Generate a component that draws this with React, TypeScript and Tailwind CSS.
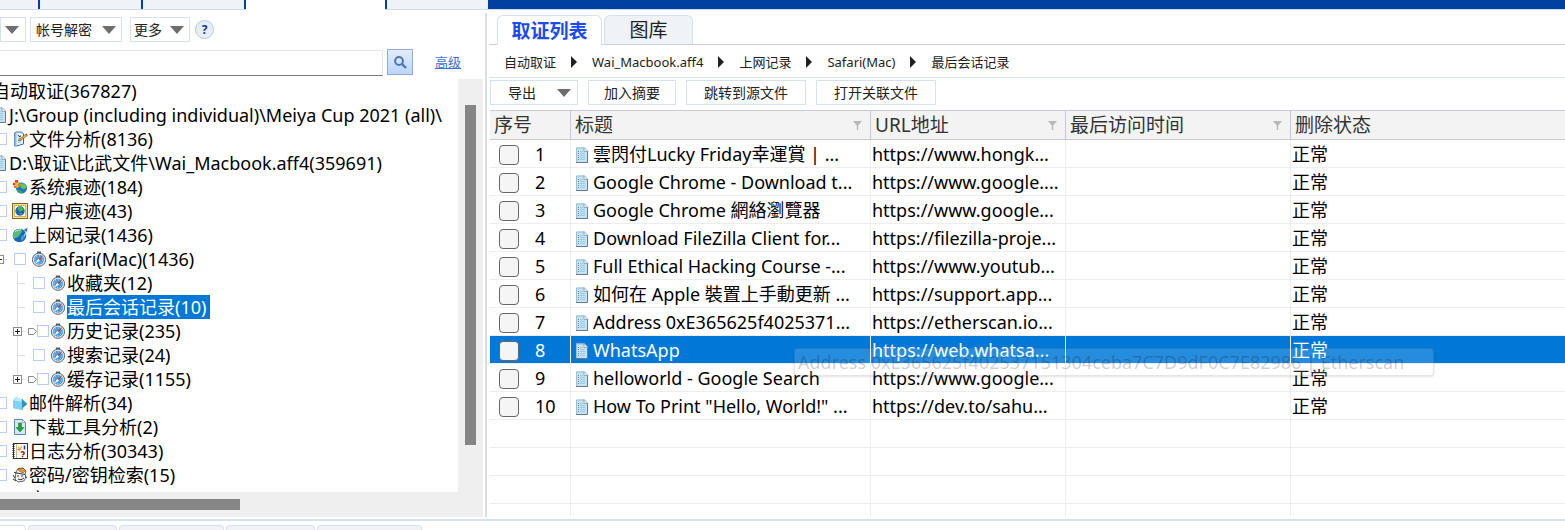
import React from 'react';

type IconName = 'doc' | 'edit' | 'system' | 'user' | 'globe' | 'compass' | 'mail' | 'download' | 'log' | 'key' | 'blank';

function Icon({ name }: { name: IconName }) {
  return (
    <svg width="16" height="16" viewBox="0 0 16 16" className="block shrink-0" aria-hidden="true">
      {name === 'doc' && (
        <g>
          <path d="M2 .5h8.500L14 4v11.500H2z" fill="#c5e2f3" />
          <path d="M2.500 15V1H10" fill="none" stroke="#9dbdd2" />
          <path d="M13.500 4v11.500H2" fill="none" stroke="#66788a" />
          <path d="M10 .5v4h4z" fill="#eef8fd" stroke="#7b93a5" strokeWidth=".7" />
          <path d="M6 4.500h3M6 6.500h5M6 8.500h5M6 10.500h5M6 12.500h5" stroke="#9ccbe6" />
          <path d="M4 4h1v1H4zM4 10h1v1H4z" fill="#3aa35a" />
          <path d="M4 6h1v1H4zM4 12h1v1H4z" fill="#4a87c0" />
          <path d="M4 8h1v1H4z" fill="#e07a5a" />
        </g>
      )}
      {name === 'edit' && (
        <g>
          <path d="M2.500 2l2-1h5l2 2v10l-7 2h-2z" fill="#e4f1fc" stroke="#2f6ea5" />
          <path d="M2.500 2v13l2-.5V1.500z" fill="#8dbde6" />
          <path d="M6 7h3M6 9h4M6 11h3" stroke="#8dbde6" />
          <path d="M7 8.500L14 3l1.500 1.500-6.500 4.500-2.500.8z" fill="#f4b93f" stroke="#6b4c1a" strokeWidth=".6" />
          <path d="M13.300 3.500l1.200-1 1 1.500-1 .8z" fill="#a9562c" />
          <path d="M6 4l1 1.500L9 5" fill="none" stroke="#333" />
        </g>
      )}
      {name === 'system' && (
        <g>
          <circle cx="9.500" cy="9" r="5.500" fill="#1f6fd0" />
          <path d="M8 5c3-2 6 1 7 3-2 1-2 3-4 2s-3-2-3-5z" fill="#5cc94a" />
          <path d="M5 11c2-1 5 0 6 3-3 1-5-1-6-3z" fill="#38a84f" />
          <path d="M1 5l3-3 3 2 1 3-3 2-3-1z" fill="#f2b632" />
          <path d="M3 1h3v2.500H3zM1 4h2v2H1z" fill="#e33b2e" />
          <path d="M2 7h2.500v2H2zM6 5h2v2H6z" fill="#e9762c" />
          <path d="M6 2.500l2 1-1 1.500z" fill="#7ed957" />
        </g>
      )}
      {name === 'user' && (
        <g>
          <rect x=".5" y=".5" width="15" height="15" fill="#f1e29a" stroke="#7d6a25" />
          <rect x="2.500" y="2.500" width="11" height="11" fill="#fffbe0" stroke="#d3b655" />
          <circle cx="8" cy="8" r="4.700" fill="#1b62c4" />
          <path d="M6 4c3-1 6 1 5.500 3C10 9 9 7 8 9 7 7 5 7 6 4zM7 10l3 0-1 2.500z" fill="#45b84c" />
        </g>
      )}
      {name === 'globe' && (
        <g>
          <circle cx="7.500" cy="8.500" r="6.800" fill="#1a64b8" />
          <path d="M3 4c3-3 7-2 7 0S8 7 7 9s-3 1-5 3C0 9 1 6 3 4z" fill="#55b97c" />
          <path d="M9 10c1-2 3-2 4-1 0 2-2 4-4 5z" fill="#3f9fd8" />
          <path d="M3 5c2-2 4-2 6-2" fill="none" stroke="#c8f0d4" />
          <path d="M12 9q2-2 2.500-6" fill="none" stroke="#9fd4f7" strokeWidth="1.200" />
          <path d="M11.500 3L15.500.5 15 5z" fill="#2c7ed6" />
        </g>
      )}
      {name === 'compass' && (
        <g>
          <path d="M6 .5h4v2H6z" fill="#555" />
          <circle cx="8" cy="8.700" r="6.600" fill="#e3e6e9" stroke="#5c6269" />
          <circle cx="8" cy="8.700" r="5" fill="#4a9de0" />
          <circle cx="8" cy="8.700" r="3.900" fill="none" stroke="#cbe8ff" strokeDasharray="1 2" />
          <path d="M12 4L9 9.500 7.200 8z" fill="#d9442f" />
          <path d="M4 13l3.200-5L9 9.500z" fill="#fff" />
        </g>
      )}
      {name === 'mail' && (
        <g>
          <path d="M1 5l3-3 4 2h3v11L1 13z" fill="#5cc0e8" />
          <path d="M1 6l9 1v8L1 13z" fill="#7fd3f0" />
          <path d="M10 4l5.500 5L10 13.500z" fill="#2b93c4" />
          <path d="M1 5.500L4 2l6 2.500L9.500 7z" fill="#b9ebfa" />
        </g>
      )}
      {name === 'download' && (
        <g>
          <path d="M2.500.5h8l3 3v12h-11z" fill="#d4e7fb" stroke="#5b84b7" />
          <path d="M10.500.5v3h3z" fill="#fff" stroke="#5b84b7" strokeWidth=".6" />
          <path d="M6.500 4h3v4.500H12l-4 4.500-4-4.500h2.500z" fill="#1da532" stroke="#0c7f20" strokeWidth=".5" />
        </g>
      )}
      {name === 'log' && (
        <g>
          <rect x="1.500" y=".5" width="14" height="15" fill="#fffdf0" stroke="#333" />
          <path d="M1.500 1v14.500" stroke="#222" strokeDasharray="1 1" strokeWidth="2" />
          <path d="M4.500 1v14" stroke="#c9bd8e" />
          <path d="M6 4l2 2M10 3L8 6M8 6v2" stroke="#eab21d" strokeWidth="1.300" />
          <path d="M12.500 2.500v4" stroke="#2236d4" strokeWidth="1.500" />
          <path d="M9 9.500q1.500-1.500 2.800-.3T10.500 12M10.500 13v1.200" fill="none" stroke="#a51616" strokeWidth="1.500" />
          <path d="M5.500 6.500h2" stroke="#d85a8b" strokeWidth="1.300" />
        </g>
      )}
      {name === 'key' && (
        <g>
          <path d="M4 5l2-3.500 5-.5 3 3-1 3 1 3-2 4-6 1-3-3z" fill="#f4f4f2" stroke="#444" strokeWidth=".8" />
          <path d="M6 2l5-.8 2.500 2.500L11 6 7 4z" fill="#f0952c" stroke="#5b3713" strokeWidth=".5" />
          <path d="M2 5.500l11 2M5 9h2M9 9h2M6 12l3 .8 3-1.800M1 8l2 3M15 10.500l-2-.5M1 12l3 2" stroke="#333" fill="none" />
        </g>
      )}
    </svg>
  );
}

interface Node {
  level: number;
  label: string;
  icon?: IconName;
  expandable?: boolean;
  selected?: boolean;
}

const nodes: Node[] = [
  { level: 0, label: '自动取证(367827)' },
  { level: 1, label: 'J:\\Group (including individual)\\Meiya Cup 2021 (all)\\', icon: 'doc' },
  { level: 2, label: '文件分析(8136)', icon: 'edit' },
  { level: 1, label: 'D:\\取证\\比武文件\\Wai_Macbook.aff4(359691)', icon: 'doc' },
  { level: 2, label: '系统痕迹(184)', icon: 'system' },
  { level: 2, label: '用户痕迹(43)', icon: 'user' },
  { level: 2, label: '上网记录(1436)', icon: 'globe' },
  { level: 3, label: 'Safari(Mac)(1436)', icon: 'compass' },
  { level: 4, label: '收藏夹(12)', icon: 'compass' },
  { level: 4, label: '最后会话记录(10)', icon: 'compass', selected: true },
  { level: 4, label: '历史记录(235)', icon: 'compass', expandable: true },
  { level: 4, label: '搜索记录(24)', icon: 'compass' },
  { level: 4, label: '缓存记录(1155)', icon: 'compass', expandable: true },
  { level: 2, label: '邮件解析(34)', icon: 'mail' },
  { level: 2, label: '下载工具分析(2)', icon: 'download' },
  { level: 2, label: '日志分析(30343)', icon: 'log' },
  { level: 2, label: '密码/密钥检索(15)', icon: 'key' },
  { level: 2, label: '文', icon: 'blank' },
];

const rows: [string, string][] = [
  ['雲閃付Lucky Friday幸運賞 | ...', 'https://www.hongk...'],
  ['Google Chrome - Download t...', 'https://www.google....'],
  ['Google Chrome 網絡瀏覽器', 'https://www.google...'],
  ['Download FileZilla Client for...', 'https://filezilla-proje...'],
  ['Full Ethical Hacking Course -...', 'https://www.youtub...'],
  ['如何在 Apple 裝置上手動更新 ...', 'https://support.app...'],
  ['Address 0xE365625f4025371...', 'https://etherscan.io...'],
  ['WhatsApp', 'https://web.whatsa...'],
  ['helloworld - Google Search', 'https://www.google...'],
  ['How To Print "Hello, World!" ...', 'https://dev.to/sahu...'],
];

const levelPadding = ['pl-px', 'pl-[2px]', 'pl-[5px]', 'pl-[5px]', 'pl-[23px]'];

function Caret() {
  return (
    <svg width="14" height="8" viewBox="0 0 14 8" aria-hidden="true">
      <path d="M0 0h14L7 8z" fill="#6e6e6e" />
    </svg>
  );
}

function Guide({ boxed, last, root }: { boxed?: boolean; last?: boolean; root?: boolean }) {
  return (
    <svg width="12" height="24" viewBox="0 0 12 24" className="block shrink-0" aria-hidden="true">
      {!root && <path d={last ? 'M4.5 0V12' : 'M4.5 0V24'} stroke="#dedede" />}
      <path d="M4.5 12.5H12" stroke="#dedede" />
      {boxed && (
        <g>
          <rect x=".5" y="8.500" width="8" height="8" fill="#fff" stroke="#8c8c8c" />
          <path d={root ? 'M2 12.500h5' : 'M2 12.500h5M4.500 10v5'} stroke="#222" />
        </g>
      )}
    </svg>
  );
}

function TreeRow({ node, last }: { node: Node; last: boolean }) {
  const { level, label, icon, expandable, selected } = node;
  return (
    <li className={`flex h-6 items-center whitespace-nowrap ${levelPadding[level]}`}>
      {level === 3 && (
        <span className="mr-[7px] flex">
          <Guide boxed root />
        </span>
      )}
      {level === 4 && <Guide boxed={expandable} last={last} />}
      {expandable && (
        <svg width="9" height="9" viewBox="0 0 9 9" className="ml-[3px] shrink-0" aria-hidden="true">
          <path d="M.5 1.500h5l3 3-3 3h-5z" fill="#fff" stroke="#888" />
        </svg>
      )}
      <label className="flex items-center">
        {level > 1 && (
          <input
            type="checkbox"
            className={`h-3 w-3 appearance-none border border-[#b9cdf6] bg-white ${
              expandable ? 'mr-[1px]' : level === 4 ? 'mr-[5px] ml-2' : 'mr-[5px]'
            }`}
          />
        )}
        {icon && <Icon name={icon} />}
        <span className={`ml-px h-6 leading-6 ${selected ? 'bg-[#0078d7] pr-1 text-white' : ''}`}>{label}</span>
      </label>
    </li>
  );
}

function Filter() {
  return (
    <svg width="9" height="9" viewBox="0 0 9 9" className="mr-2 shrink-0" aria-hidden="true">
      <path d="M0 0h9L5.200 4.500V9H3.800V4.500z" fill="#b8b8b8" />
    </svg>
  );
}

function HeaderCell({ text, filter }: { text: string; filter?: boolean }) {
  return (
    <th scope="col" className="border-r border-[#c8c8da] p-0 pl-1 text-left font-normal last:border-r-0">
      <div className="flex items-center justify-between">
        {text}
        {filter && <Filter />}
      </div>
    </th>
  );
}

export default function App() {
  const crumbs = ['自动取证', 'Wai_Macbook.aff4', '上网记录', 'Safari(Mac)', '最后会话记录'];
  return (
    <div className="flex h-screen flex-col overflow-hidden bg-white font-['Noto_Sans','Noto_Sans_CJK_SC',sans-serif] text-lg text-black">
      <nav className="flex h-[10px] shrink-0 gap-[2px] border-b border-[#ccd9ee] bg-[#0040a0]" aria-label="模块">
        <span className="w-[38px] bg-[#eff3f8]" />
        <span className="w-[101px] bg-[#eff3f8]" />
        <span className="w-[101px] bg-[#eff3f8]" />
        <span className="-mb-px w-[139px] bg-white" />
        <span className="w-[101px] bg-[#eff3f8]" />
      </nav>

      <div className="flex min-h-0 flex-1">
        <aside className="flex w-[485px] shrink-0 flex-col">
          <div className="flex h-10 shrink-0 items-start pt-[7px]">
            <button className="flex h-[25px] w-[26px] items-center justify-end border border-[#d6e0f0] bg-white pr-[6px]" aria-label="展开">
              <Caret />
            </button>
            <button className="ml-1 flex h-[25px] w-[92px] items-center justify-between border border-[#d6e0f0] px-[5px] text-sm text-[#222]">
              帐号解密 <Caret />
            </button>
            <button className="ml-2 flex h-[25px] w-[60px] items-center justify-between border border-[#d6e0f0] pr-[5px] pl-[3px] text-sm text-[#222]">
              更多 <Caret />
            </button>
            <button className="mt-[3px] ml-[5px] h-[19px] w-[19px] rounded-full border border-[#b4c9e4] bg-[#e9eef5] text-xs leading-none font-bold text-[#0b3c91]">
              ?
            </button>
          </div>
          <div className="flex h-[29px] shrink-0 items-start">
            <input
              aria-label="搜索"
              className="h-[26px] w-[383px] border-t border-r border-b border-t-[#e5e5e5] border-r-[#e5e5e5] border-b-[#777] bg-white px-1 text-sm outline-none"
            />
            <button
              aria-label="查找"
              className="-mt-px ml-1 flex h-[26px] w-[26px] items-center justify-center border border-[#8facd3] bg-linear-to-b from-[#e2edfd] to-[#bcd5fb]"
            >
              <svg width="13" height="13" viewBox="0 0 13 13" aria-hidden="true">
                <circle cx="5" cy="5" r="3.900" fill="none" stroke="#4b78b3" strokeWidth="2" />
                <path d="M8 8l4 4" stroke="#4b78b3" strokeWidth="2.400" />
              </svg>
            </button>
            <a href="#advanced" className="ml-[22px] text-[13px] leading-6 text-[#3c6fdc] underline">
              高级
            </a>
          </div>

          <div className="mr-[2px] flex min-h-0 flex-1">
            <ul className="min-w-0 flex-1 overflow-hidden">
              <div className="-ml-[10px]">
                {nodes.map((node, i) => (
                  <TreeRow key={node.label} node={node} last={nodes[i + 1]?.level !== 4} />
                ))}
              </div>
            </ul>
            <div className="w-[25px] bg-[#efefef] pt-[26px] pl-[7px]">
              <div className="h-[340px] w-[11px] bg-[#858585]" />
            </div>
          </div>
          <div className="mr-[2px] h-[25px] shrink-0 bg-[#efefef] pt-[7px]">
            <div className="h-[11px] w-[240px] bg-[#858585]" />
          </div>
        </aside>

        <main className="mt-[3px] flex min-w-0 flex-1 flex-col border-l-2 border-[#d6e0f0]">
          <div className="ml-[2px] flex h-8 shrink-0 items-end gap-[2px] border-b border-[#ccd0e0] pl-2" role="tablist">
            <button role="tab" aria-selected="true" className="-mb-px h-[30px] w-[105px] rounded-t-md border border-b-0 border-[#d6e0f0] bg-white text-[19px] leading-7 font-bold text-[#1a4bee]">
              取证列表
            </button>
            <button role="tab" aria-selected="false" className="h-[29px] w-[89px] rounded-t-md border border-b-0 border-[#d6e0f0] bg-[#eff3f8] text-[19px] leading-7 text-[#222]">
              图库
            </button>
          </div>
          <nav className="ml-[2px] flex h-[33px] shrink-0 items-center border-b border-[#d6e0f0] pt-[2px] pl-[15px] text-[13px] text-[#222]" aria-label="路径">
            {crumbs.map((crumb, i) => (
              <React.Fragment key={crumb}>
                {i > 0 && (
                  <svg width="6" height="12" viewBox="0 0 6 12" className="mx-[15px]" aria-hidden="true">
                    <path d="M0 0l6 6-6 6z" fill="#222" />
                  </svg>
                )}
                <a href="#path">{crumb}</a>
              </React.Fragment>
            ))}
          </nav>
          <div className="ml-[3px] flex h-8 shrink-0 items-start gap-[10px] pt-[2px]">
            <button className="flex h-[25px] w-[88px] items-center justify-between border border-[#d6e0f0] pr-[6px] pl-[17px] text-sm text-[#222]">
              导出 <Caret />
            </button>
            <button className="h-[25px] w-[88px] border border-[#d6e0f0] text-sm text-[#222]">加入摘要</button>
            <button className="h-[25px] w-[120px] border border-[#d6e0f0] text-sm text-[#222]">跳转到源文件</button>
            <button className="h-[25px] w-[120px] border border-[#d6e0f0] text-sm text-[#222]">打开关联文件</button>
          </div>

          <div className="relative ml-[3px] min-h-0 flex-1 overflow-hidden">
            <table className="w-full table-fixed border-separate border-spacing-0">
              <colgroup>
                <col className="w-[81px]" />
                <col className="w-[300px]" />
                <col className="w-[195px]" />
                <col className="w-[225px]" />
                <col />
              </colgroup>
              <thead>
                <tr className="h-[30px] bg-[#f3f3f3] text-[19px] leading-7 text-[#333] [&>th]:border-y [&>th]:border-y-[#c8c8da]">
                  <HeaderCell text="序号" />
                  <HeaderCell text="标题" filter />
                  <HeaderCell text="URL地址" filter />
                  <HeaderCell text="最后访问时间" filter />
                  <HeaderCell text="删除状态" />
                </tr>
              </thead>
              <tbody className="[&_td]:h-7 [&_td]:border-r [&_td]:border-b [&_td]:border-[#ededed] [&_td]:p-0 [&_td]:pt-[2px] [&_td]:leading-[25px] [&_td]:whitespace-nowrap [&_td:last-child]:border-r-0">
                {rows.map(([title, url], i) => (
                  <tr key={i} className={i === 7 ? 'bg-[#0078d7] text-white' : ''}>
                    <td>
                      <label className="flex items-center gap-4 pl-[9px]">
                        <input type="checkbox" className="h-5 w-5 appearance-none rounded border border-[#666] bg-[#f5f5f5]" />
                        {i + 1}
                      </label>
                    </td>
                    <td>
                      <div className="flex items-center gap-[3px] overflow-hidden pl-[3px]">
                        <Icon name="doc" />
                        {title}
                      </div>
                    </td>
                    <td>
                      <div className="overflow-hidden pl-px">{url}</div>
                    </td>
                    <td />
                    <td>
                      <div className="pl-px">正常</div>
                    </td>
                  </tr>
                ))}
                {[0, 1, 2, 3].map((i) => (
                  <tr key={`empty-${i}`}>
                    <td />
                    <td />
                    <td />
                    <td />
                    <td />
                  </tr>
                ))}
              </tbody>
            </table>
            <div
              role="tooltip"
              className="absolute top-[238px] left-[304px] h-7 w-[640px] rounded-sm border border-black/10 bg-white/15 px-[3px] leading-[26px] whitespace-nowrap text-black/20 shadow-sm"
            >
              Address 0xE365625f402537151304ceba7C7D9dF0C7E82986 | Etherscan
            </div>
          </div>
        </main>
      </div>

      <footer className="mt-[2px] flex h-[11px] shrink-0 items-end gap-[2px] overflow-hidden border-t-2 border-[#d6e0f0]">
        <span className="h-[5px] w-[26px] rounded-tr border-t border-r border-[#d6e0f0] bg-white" />
        <span className="h-[5px] w-[89px] rounded-t border border-b-0 border-[#d6e0f0] bg-[#eff3f8]" />
        <span className="h-[5px] w-[105px] rounded-t border border-b-0 border-[#d6e0f0] bg-[#eff3f8]" />
        <span className="h-[5px] w-[89px] rounded-t border border-b-0 border-[#d6e0f0] bg-[#eff3f8]" />
        <span className="h-[5px] w-[105px] rounded-t border border-b-0 border-[#d6e0f0] bg-[#eff3f8]" />
      </footer>
    </div>
  );
}
